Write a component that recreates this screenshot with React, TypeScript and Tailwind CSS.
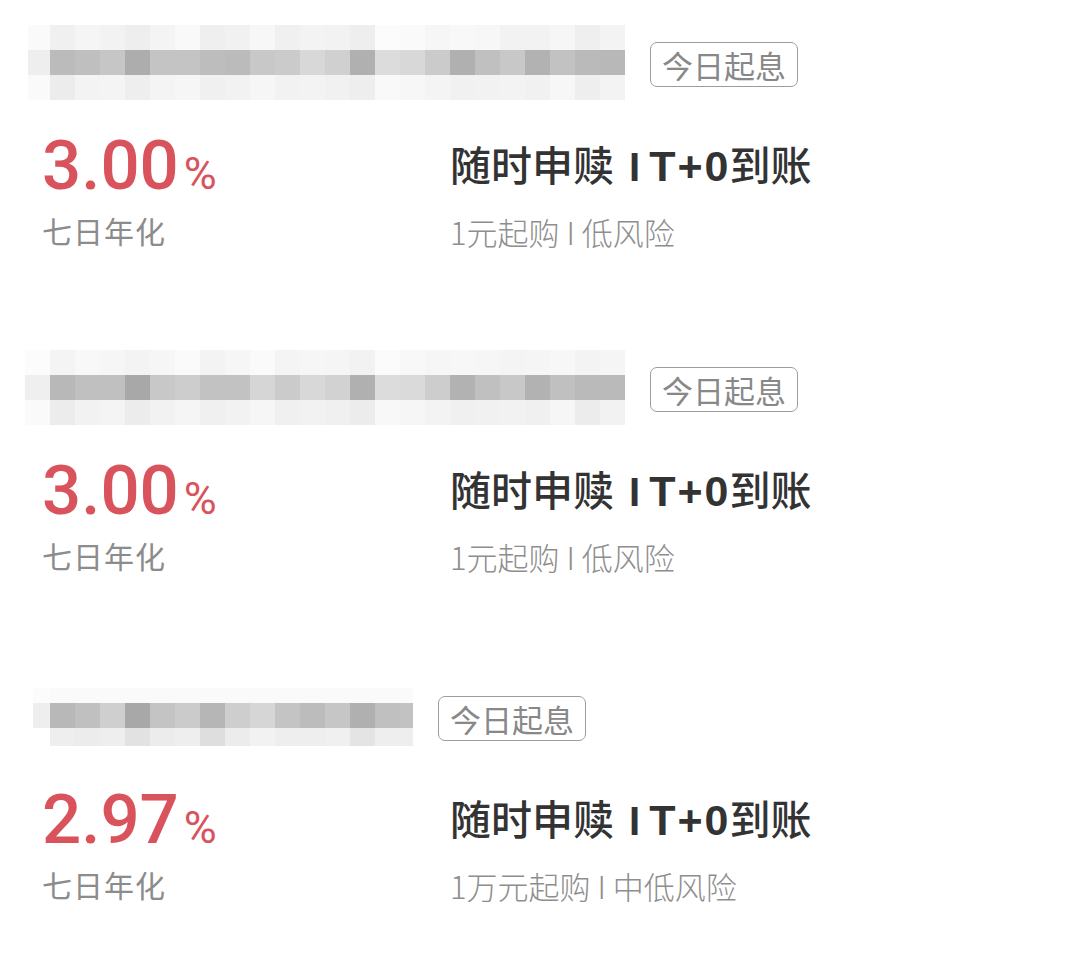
import React from "react"

type Col = { w: number; c: [string, string, string] }

interface Fund {
  mosaic: { x: number; rows: [number, number, number]; cols: Col[] }
  rate: string
  sub: string
  height: number
}

// pixelated product names, grey levels read off the screenshot
const g = (v: number) => `rgb(${v},${v},${v})`

const mk = (top: number[], mid: number[], bot: number[], widths: number[]): Col[] =>
  widths.map((w, i) => ({ w, c: [g(top[i]), g(mid[i]), g(bot[i])] }))

const funds: Fund[] = [
  {
    mosaic: {
      x: 28,
      rows: [25, 25, 25],
      cols: mk(
        [250, 240, 245, 242, 238, 244, 249, 239, 241, 247, 240, 243, 242, 238, 252, 250, 246, 248, 247, 242, 242, 246, 239, 243],
        [238, 187, 191, 198, 173, 196, 196, 189, 187, 200, 203, 216, 208, 176, 220, 216, 203, 176, 192, 200, 178, 194, 186, 184],
        [250, 236, 243, 244, 238, 244, 246, 240, 242, 246, 242, 243, 241, 238, 249, 247, 244, 241, 242, 243, 241, 247, 238, 243],
        [22, ...Array(23).fill(25)]
      ),
    },
    rate: "3.00",
    sub: "1元起购 I 低风险",
    height: 325,
  },
  {
    mosaic: {
      x: 25,
      rows: [25, 25, 25],
      cols: mk(
        [252, 244, 248, 246, 243, 246, 250, 243, 246, 250, 244, 246, 245, 242, 251, 248, 246, 247, 246, 244, 245, 247, 243, 245],
        [239, 184, 192, 192, 168, 200, 205, 194, 194, 214, 203, 216, 210, 176, 220, 218, 205, 178, 192, 200, 178, 192, 186, 186],
        [250, 236, 242, 244, 236, 242, 245, 240, 242, 246, 240, 242, 240, 236, 248, 246, 243, 240, 241, 242, 240, 246, 236, 242],
        [25, ...Array(23).fill(25)]
      ),
    },
    rate: "3.00",
    sub: "1元起购 I 低风险",
    height: 329,
  },
  {
    mosaic: {
      x: 33,
      rows: [15, 25, 18],
      cols: mk(
        [252, 250, 250, 250, 250, 250, 250, 250, 250, 250, 250, 250, 250, 250, 250, 250],
        [238, 184, 192, 207, 168, 196, 203, 182, 206, 214, 196, 188, 198, 176, 192, 194],
        [255, 238, 236, 238, 226, 236, 238, 222, 236, 242, 238, 238, 240, 228, 238, 238],
        [17, ...Array(14).fill(25), 13]
      ),
    },
    rate: "2.97",
    sub: "1万元起购 I 中低风险",
    height: 300,
  },
]

function Mosaic({ rows, cols }: { rows: [number, number, number]; cols: Col[] }) {
  const width = cols.reduce((s, c) => s + c.w, 0)
  const height = rows[0] + rows[1] + rows[2]
  let x = 0
  return (
    <svg width={width} height={height} className="block shrink-0">
      {cols.map((col, i) => {
        const x0 = x
        x += col.w
        let y = 0
        return col.c.map((fill, r) => {
          const y0 = y
          y += rows[r]
          return <rect key={`${i}-${r}`} x={x0} y={y0} width={col.w} height={rows[r]} fill={fill} />
        })
      })}
    </svg>
  )
}

function FundRow({ fund }: { fund: Fund }) {
  return (
    <section className="flex flex-col" style={{ height: fund.height }}>
      {/* Header: blurred name + badge */}
      <div className="flex h-[75px] items-center" style={{ paddingLeft: fund.mosaic.x }}>
        <Mosaic rows={fund.mosaic.rows} cols={fund.mosaic.cols} />
        <span className="ml-[25px] mt-[4px] flex h-[45px] items-center rounded-[7px] border border-[#9c9c9c] px-[11px] text-[31px] leading-none text-[#888888]">
          今日起息
        </span>
      </div>

      {/* Body */}
      <div className="mt-[32px] flex items-start pl-[42px]">
        <div className="flex w-[408px] flex-col">
          <div className="flex items-baseline font-['Roboto',Arial,sans-serif] text-[#d9535d]">
            <span className="text-[69px] font-medium leading-[68px]">{fund.rate}</span>
            <span className="ml-[5px] text-[45px] leading-none">%</span>
          </div>
          <p className="mt-[15px] text-[30px] leading-[30px] tracking-[1px] text-[#8c8c8c]">七日年化</p>
        </div>
        <div className="flex flex-col pt-[10px]">
          <p className="flex items-baseline text-[41px] font-medium leading-[42px] text-[#333333]">
            <span>随时申赎</span>
            <span className="ml-[15px] mr-[9px] font-['Liberation_Sans',Arial,sans-serif] text-[40px] font-bold">I</span>
            <span className="mr-[-1px] font-['Liberation_Sans',Arial,sans-serif] text-[43px] font-bold tracking-[2px]">T+0</span>
            <span>到账</span>
          </p>
          <p className="mt-[28px] text-[31px] font-light leading-[31px] text-[#8e8e8e]">{fund.sub}</p>
        </div>
      </div>
    </section>
  )
}

export default function App() {
  return (
    <div className="h-[970px] w-[1080px] overflow-hidden bg-white pt-[25px] font-['Noto_Sans_CJK_SC',sans-serif]">
      {funds.map((fund, i) => (
        <FundRow key={i} fund={fund} />
      ))}
    </div>
  )
}
